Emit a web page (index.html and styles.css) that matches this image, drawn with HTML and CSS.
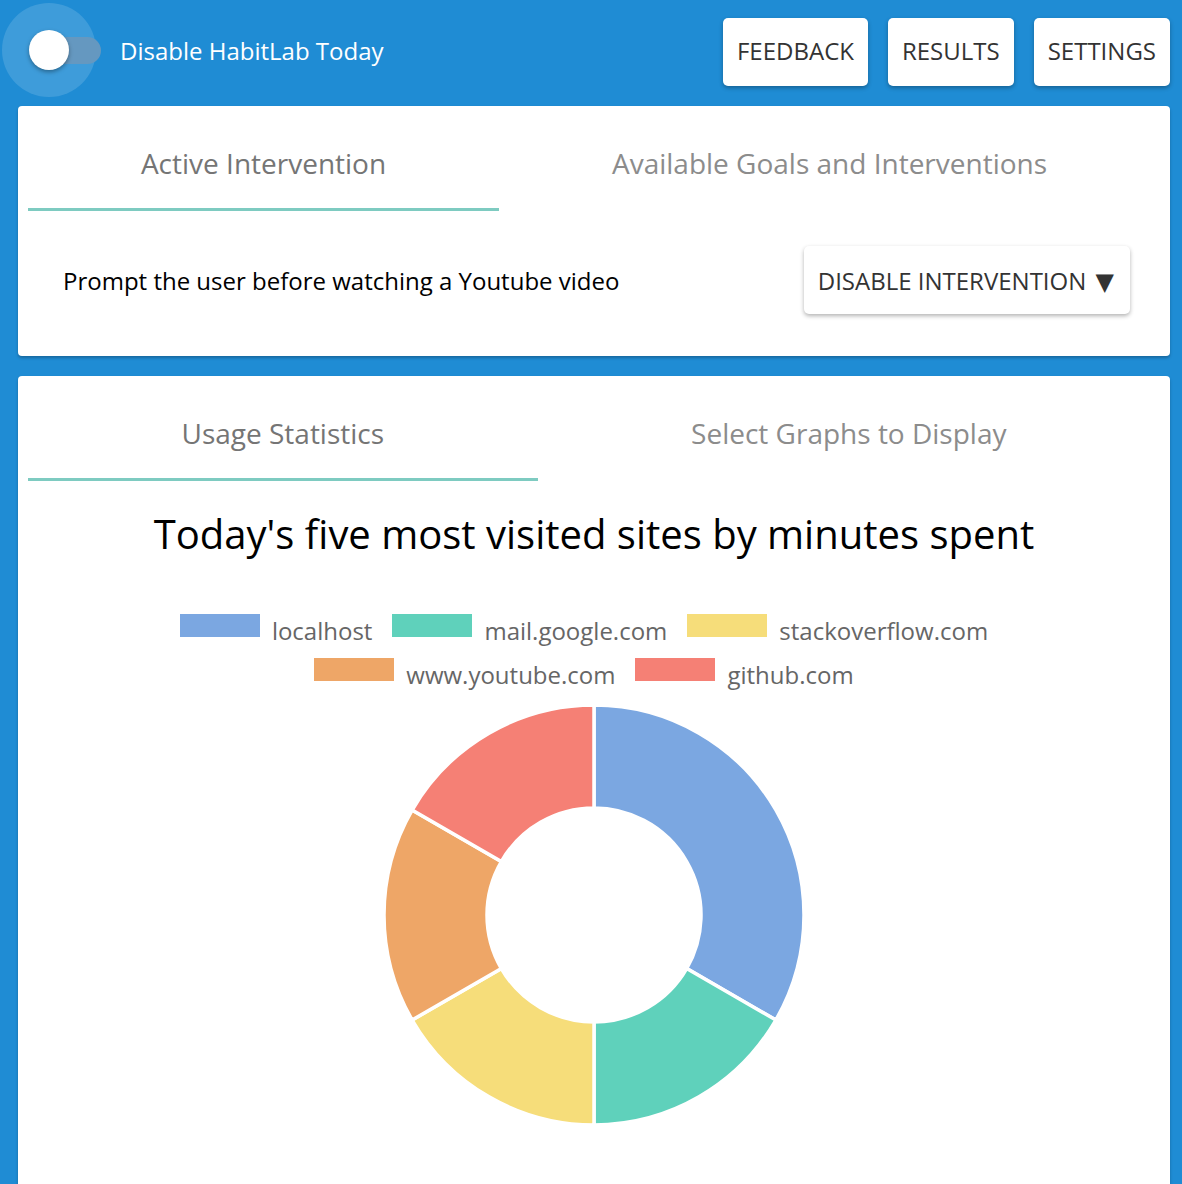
FILE: index.html
```html
<!DOCTYPE html>
<html>
<head>
<meta charset="utf-8">
<link rel="stylesheet" href="styles.css">
</head>
<body>
<header class="topbar">
  <div class="toggle">
    <span class="toggle-track"></span>
    <span class="toggle-knob"></span>
  </div>
  <span class="toggle-label">Disable HabitLab Today</span>
  <nav class="actions">
    <button class="btn">FEEDBACK</button>
    <button class="btn">RESULTS</button>
    <button class="btn">SETTINGS</button>
  </nav>
</header>

<section class="card">
  <div class="tabs">
    <div class="tab active">Active Intervention</div>
    <div class="tab">Available Goals and Interventions</div>
  </div>
  <div class="intervention-row">
    <span class="intervention-text">Prompt the user before watching a Youtube video</span>
    <button class="btn btn-dropdown">DISABLE INTERVENTION <span class="caret">▼</span></button>
  </div>
</section>

<section class="card card-stats">
  <div class="tabs">
    <div class="tab active">Usage Statistics</div>
    <div class="tab">Select Graphs to Display</div>
  </div>
  <h2 class="chart-title">Today's five most visited sites by minutes spent</h2>
  <div class="legend">
    <div class="legend-row">
      <span class="legend-item"><i class="swatch c-blue"></i><span class="legend-label">localhost</span></span>
      <span class="legend-item"><i class="swatch c-green"></i><span class="legend-label">mail.google.com</span></span>
      <span class="legend-item"><i class="swatch c-yellow"></i><span class="legend-label">stackoverflow.com</span></span>
    </div>
    <div class="legend-row">
      <span class="legend-item"><i class="swatch c-orange"></i><span class="legend-label">www.youtube.com</span></span>
      <span class="legend-item"><i class="swatch c-red"></i><span class="legend-label">github.com</span></span>
    </div>
  </div>
  <div class="chart">
    <svg class="donut" width="424" height="424" viewBox="-2 -2 424 424">
      <g stroke="#fff" stroke-width="3.5" stroke-linejoin="miter">
        <path fill="#7ba7e1" d="M210 0 A210 210 0 0 1 391.87 315 L302.66 263.5 A107 107 0 0 0 210 103 Z"/>
        <path fill="#5fd1bb" d="M391.87 315 A210 210 0 0 1 210 420 L210 317 A107 107 0 0 0 302.66 263.5 Z"/>
        <path fill="#f6dd7a" d="M210 420 A210 210 0 0 1 28.13 315 L117.34 263.5 A107 107 0 0 0 210 317 Z"/>
        <path fill="#eea667" d="M28.13 315 A210 210 0 0 1 28.13 105 L117.34 156.5 A107 107 0 0 0 117.34 263.5 Z"/>
        <path fill="#f58075" d="M28.13 105 A210 210 0 0 1 210 0 L210 103 A107 107 0 0 0 117.34 156.5 Z"/>
      </g>
    </svg>
  </div>
</section>
</body>
</html>
```

FILE: styles.css
```css
* { box-sizing: border-box; }

html, body {
  margin: 0;
  background: #1f8cd4;
  font-family: "Open Sans", "DejaVu Sans", sans-serif;
}

body {
  height: 1184px;
  overflow: hidden;
}

.topbar {
  display: flex;
  align-items: flex-start;
  height: 106px;
  padding: 0 12px 0 2px;
}

.toggle {
  position: relative;
  width: 94px;
  height: 94px;
  margin-top: 3px;
  border-radius: 50%;
  background: rgba(255, 255, 255, 0.14);
  flex: none;
}

.toggle-track {
  position: absolute;
  left: 34px;
  top: 34px;
  width: 65px;
  height: 27px;
  border-radius: 14px;
  background: #6598c0;
}

.toggle-knob {
  position: absolute;
  left: 27px;
  top: 27px;
  width: 40px;
  height: 40px;
  border-radius: 50%;
  background: #fff;
  box-shadow: 0 2px 4px rgba(0, 0, 0, 0.35);
}

.toggle-label {
  margin-left: 24px;
  margin-top: 34px;
  font-size: 24px;
  line-height: 33px;
  color: #fff;
}

.actions {
  margin-left: auto;
  margin-top: 18px;
  display: flex;
  gap: 20px;
}

.btn {
  height: 68px;
  padding: 0 14px 4px;
  border: none;
  border-radius: 5px;
  background: #fff;
  color: #333;
  font-family: inherit;
  font-size: 24px;
  box-shadow: 0 2px 4px rgba(0, 0, 0, 0.3);
}

.card {
  margin: 0 12px 0 18px;
  padding: 0 10px;
  background: #fff;
  border-radius: 4px;
  box-shadow: 0 2px 3px rgba(0, 0, 0, 0.25);
}

.card + .card {
  margin-top: 20px;
}

.tabs {
  display: flex;
}

.tab {
  flex: 1 1 auto;
  height: 105px;
  padding-top: 38px;
  text-align: center;
  font-size: 28px;
  line-height: 38px;
  color: #8c8c8c;
  border-bottom: 3px solid transparent;
}

.tab.active {
  color: #757575;
  border-bottom-color: #7ecbc1;
}

.intervention-row {
  display: flex;
  align-items: center;
  justify-content: space-between;
  padding: 35px 30px 42px 35px;
}

.intervention-text {
  font-size: 24px;
  color: #000;
}

.btn-dropdown {
  padding: 0 16px 0 14px;
}

.caret {
  margin-left: 3px;
}

.card-stats {
  padding-bottom: 80px;
}

.chart-title {
  margin: 26px 0 0;
  text-align: center;
  font-size: 40px;
  line-height: 54px;
  font-weight: normal;
  color: #000;
}

.legend {
  margin-top: 53px;
  display: flex;
  flex-direction: column;
  gap: 21px;
}

.legend-row {
  display: flex;
  justify-content: center;
  height: 23px;
}

.legend-item {
  display: flex;
  align-items: flex-start;
  margin-right: 20px;
  font-size: 24px;
  line-height: 23px;
  color: #666;
}

.legend-label {
  margin-top: 5px;
}

.swatch {
  width: 80px;
  height: 23px;
  margin-right: 12px;
}

.c-blue { background: #7ba7e1; }
.c-green { background: #5fd1bb; }
.c-yellow { background: #f6dd7a; }
.c-orange { background: #eea667; }
.c-red { background: #f58075; }

.chart {
  display: flex;
  justify-content: center;
  margin-top: 22px;
}

.donut {
  display: block;
}
```
